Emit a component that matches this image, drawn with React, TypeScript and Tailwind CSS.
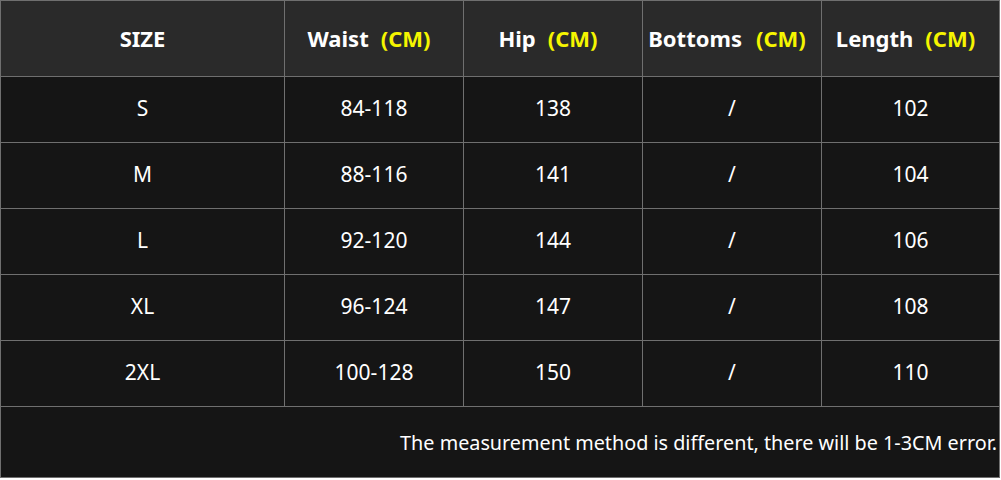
import React from "react";

const rows = [
  ["S", "84-118", "138", "/", "102"],
  ["M", "88-116", "141", "/", "104"],
  ["L", "92-120", "144", "/", "106"],
  ["XL", "96-124", "147", "/", "108"],
  ["2XL", "100-128", "150", "/", "110"],
];

function Head({ label, gap }: { label: string; gap?: string }) {
  return (
    <div
      className={`bg-[#2a2a2a] flex items-center justify-center font-bold text-[22px] text-white ${
        gap !== undefined ? "pr-[10px]" : ""
      }`}
    >
      {label}
      {gap !== undefined && (
        <>
          <span className={gap} />
          <span className="text-[#f5f500]">(CM)</span>
        </>
      )}
    </div>
  );
}

export default function App() {
  return (
    <div
      className="w-[1001px] h-[480px] bg-white"
      style={{ fontFamily: '"Noto Sans", "Open Sans", sans-serif' }}
    >
      <div className="grid grid-cols-[283px_178px_178px_178px_177px] grid-rows-[75px_65px_65px_65px_65px_65px_70px] gap-px p-px bg-[#6f6f6f] w-[1000px] h-[478px]">
        <Head label="SIZE" />
        <Head label="Waist" gap="w-[12px]" />
        <Head label="Hip" gap="w-[12px]" />
        <Head label="Bottoms" gap="w-[14px]" />
        <Head label="Length" gap="w-[12px]" />
        {rows.map((r, i) =>
          r.map((c, j) => (
            <div
              key={`${i}-${j}`}
              className="bg-[#151515] flex items-center justify-center pb-[1px] text-[21px] text-white"
            >
              {c}
            </div>
          ))
        )}
        <div className="col-span-5 bg-[#151515] flex items-center justify-end pr-[2px] pt-[1px] text-[19.8px] text-white">
          The measurement method is different, there will be 1-3CM error.
        </div>
      </div>
    </div>
  );
}
